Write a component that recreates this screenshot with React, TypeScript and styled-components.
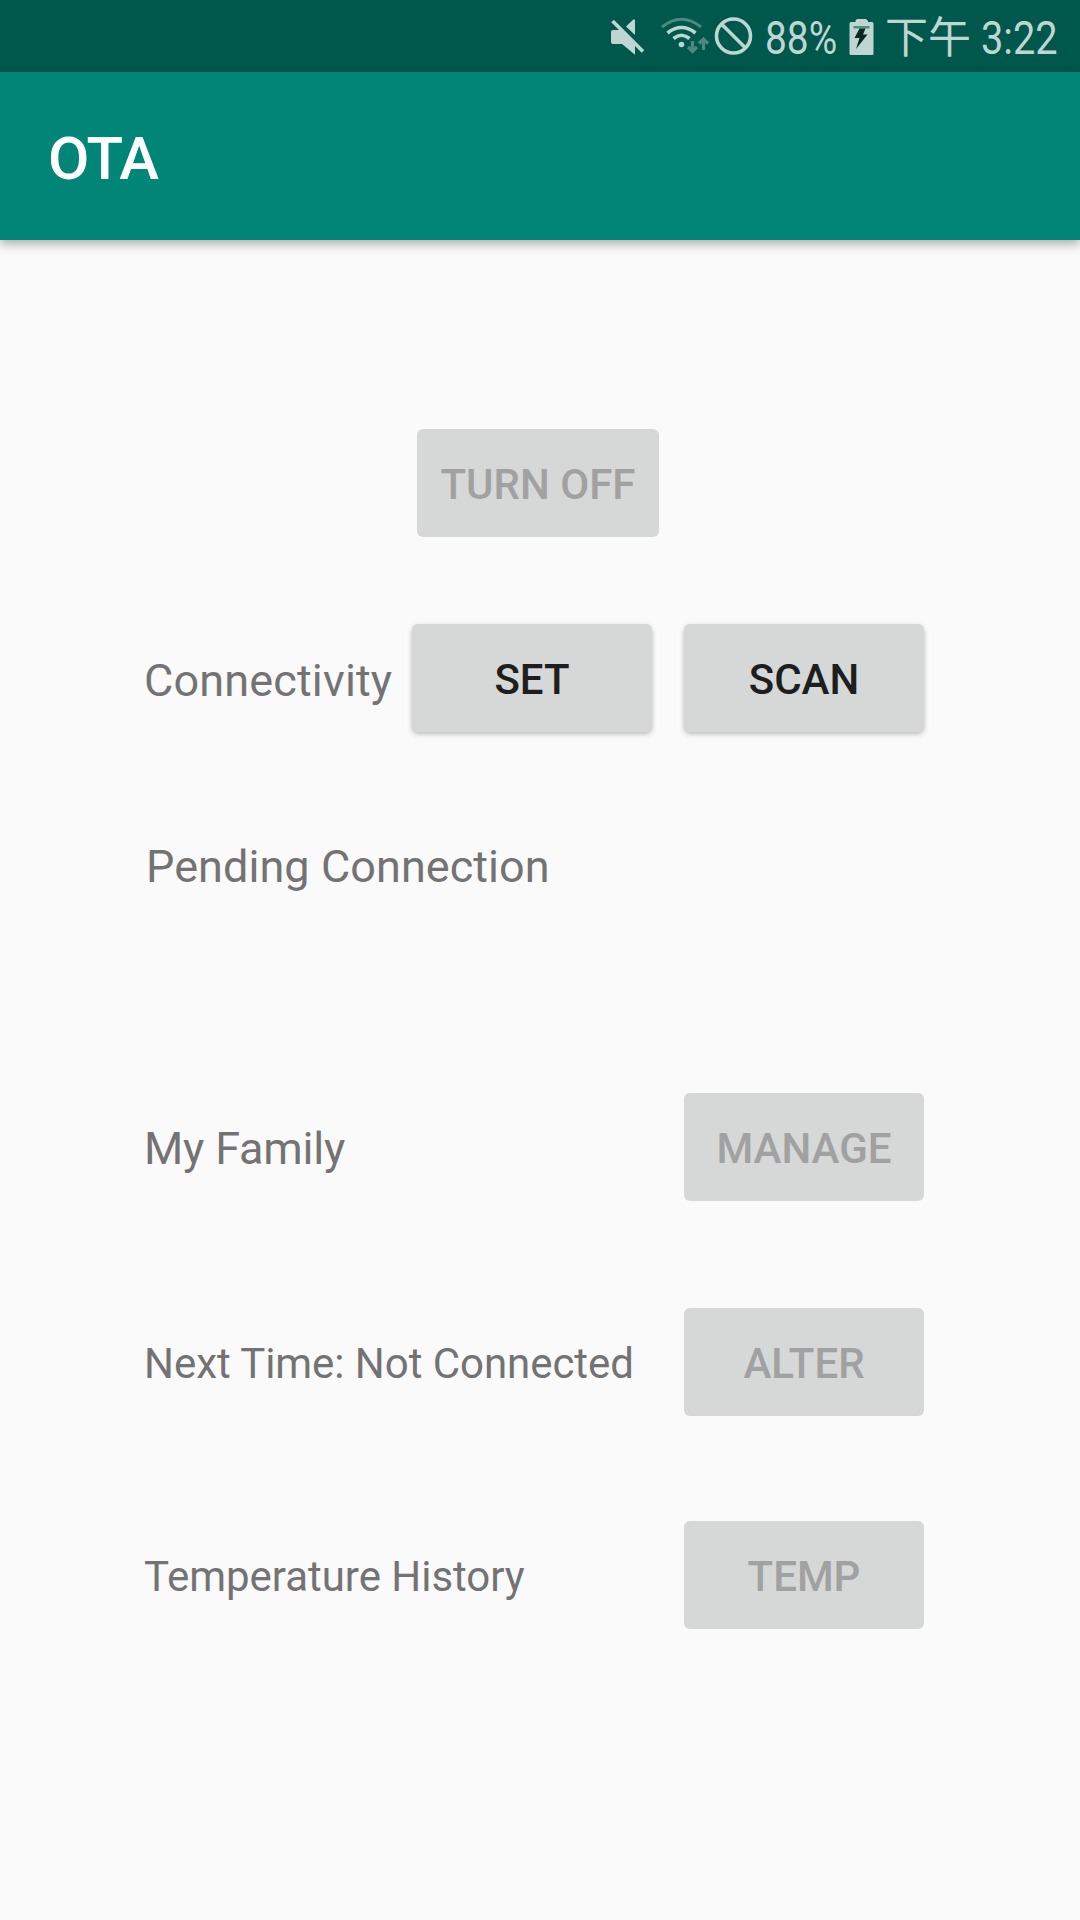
import React from 'react';
import styled, { createGlobalStyle } from 'styled-components';

const GlobalStyle = createGlobalStyle`
  * { box-sizing: border-box; }
  body { margin: 0; background: #fafafa; }
`;

const Screen = styled.div`
  width: 1080px;
  height: 1920px;
  display: flex;
  flex-direction: column;
  background: #fafafa;
  overflow: hidden;
  font-family: Roboto, "Noto Sans CJK SC", sans-serif;
`;

const StatusBar = styled.header`
  height: 72px;
  flex: none;
  display: flex;
  align-items: center;
  justify-content: flex-end;
  padding: 0 21px 0 0;
  background: #00574b;
  color: #bfd5d2;
`;

const StatusIcon = styled.svg<{ $gap: number }>`
  flex: none;
  display: block;
  margin-right: ${p => p.$gap}px;
`;

const StatusText = styled.span<{ $width: number; $gap: number; $size?: number; $scale?: number; $top?: number }>`
  display: block;
  width: ${p => p.$width}px;
  margin-right: ${p => p.$gap}px;
  padding-top: ${p => p.$top ?? 4}px;
  font-size: ${p => p.$size ?? 46}px;
  line-height: 64px;
  white-space: nowrap;
  transform: scaleX(${p => p.$scale ?? 0.865});
  transform-origin: 0 50%;
`;

const AppBar = styled.div`
  height: 168px;
  flex: none;
  display: flex;
  align-items: center;
  padding: 6px 48px 0;
  background: #008577;
  box-shadow: 0 4px 10px rgba(0, 0, 0, 0.32);
`;

const Title = styled.h1`
  margin: 0;
  color: #fff;
  font-size: 60px;
  font-weight: 500;
  line-height: 80px;
  letter-spacing: -1.3px;
`;

const Content = styled.main`
  flex: 1;
  display: flex;
  flex-direction: column;
  padding: 189px 156px 0 144px;
`;

const Row = styled.section<{ $gap: number; $left?: number }>`
  flex: none;
  height: 108px;
  margin-bottom: ${p => p.$gap}px;
  padding-left: ${p => p.$left ?? 0}px;
  display: flex;
  align-items: center;
`;

const Label = styled.span<{ $size: number; $shift?: number; $spacing?: number }>`
  flex: 1;
  color: #737373;
  font-size: ${p => p.$size}px;
  line-height: 60px;
  letter-spacing: ${p => p.$spacing ?? 0}px;
  padding-top: ${p => p.$shift ?? 4}px;
  white-space: nowrap;
`;

const Button = styled.button<{ $width?: number; $gap?: number }>`
  flex: none;
  width: ${p => p.$width ?? 240}px;
  height: 108px;
  margin: 0 ${p => p.$gap ?? 0}px 0 0;
  padding: 3px 0 0;
  border: 0;
  border-radius: 6px;
  background: #d6d7d7;
  color: #1e1e1e;
  font: 500 42px Roboto, sans-serif;
  box-shadow: 0 2px 5px rgba(0, 0, 0, 0.26);
  &:disabled { color: #a1a1a1; box-shadow: none; }
`;

const MuteIcon = () => (
  <StatusIcon $gap={15} width="35" height="38" viewBox="610 17 35 38">
    <path fill="currentColor" d="M613 30H621L635 44V54.800L622 44H613q-2 0-2-2V32q0-2 2-2zM626 26.500L633 19.800q2-1.500 2 1V35z" />
    <path d="M612.500 21L643 51.500" stroke="currentColor" strokeWidth="3.800" />
  </StatusIcon>
);

const WifiIcon = () => (
  <StatusIcon $gap={4.5} width="49" height="38" viewBox="660 17 49 38" fill="none" stroke="currentColor">
    <path d="M662 27Q681.500 11.500 701 27" strokeWidth="3" opacity=".4" />
    <path d="M667.500 33Q681.500 22 695.500 33M673.500 38.500Q681.500 32 689.500 38.500" strokeWidth="3.600" />
    <circle cx="681.500" cy="44.500" r="2.800" fill="currentColor" stroke="none" />
    <path d="M692.500 41V51M688 47l4.500 4.500L697 47M703.500 50V40M699 43.500l4.500-4.500 4.500 4.500" strokeWidth="3.200" opacity=".4" />
  </StatusIcon>
);

const BlockIcon = () => (
  <StatusIcon $gap={12.5} width="39" height="38" viewBox="713.5 17 39 38" fill="none" stroke="currentColor" strokeWidth="3.600">
    <circle cx="733" cy="36" r="17" />
    <path d="M721 24L745 48" />
  </StatusIcon>
);

const BatteryIcon = () => (
  <StatusIcon $gap={11.5} width="25" height="38" viewBox="0 -1 25 38">
    <path fill="currentColor" d="M8 1h9l2 2v1h4q1.500 0 1.500 1.500v30q0 1.500-1.500 1.500H2Q.500 37 .500 35.500v-30Q.500 4 2 4h4.500V2.500z" />
    <path fill="#4f8c84" d="M4.500 8h16v2.500h-16z" />
    <path fill="#0b2724" d="M10.500 10.500h6l-2.500 6h4.500L7 31l3.500-11H5.500z" />
  </StatusIcon>
);

export default function App() {
  return (
    <Screen>
      <GlobalStyle />
      <StatusBar>
        <MuteIcon />
        <WifiIcon />
        <BlockIcon />
        <StatusText $width={72} $gap={11.5} $scale={0.845}>88%</StatusText>
        <BatteryIcon />
        <StatusText $width={87} $gap={9} $size={43} $scale={1} $top={3}>下午</StatusText>
        <StatusText $width={78} $gap={0}>3:22</StatusText>
      </StatusBar>
      <AppBar><Title>OTA</Title></AppBar>
      <Content>
        <Row $gap={87} $left={273}><Button disabled $width={242}>TURN OFF</Button></Row>
        <Row $gap={80}>
          <Label $size={45} $shift={6} $spacing={0.15}>Connectivity</Label>
          <Button $gap={32}>SET</Button>
          <Button>SCAN</Button>
        </Row>
        <Row $gap={173} $left={2}><Label $size={45} $shift={2} $spacing={0.06}>Pending Connection</Label></Row>
        <Row $gap={107}><Label $size={45} $spacing={-0.2}>My Family</Label><Button disabled>MANAGE</Button></Row>
        <Row $gap={105}><Label $size={42} $spacing={-0.05}>Next Time: Not Connected</Label><Button disabled>ALTER</Button></Row>
        <Row $gap={0}><Label $size={42} $spacing={-0.03}>Temperature History</Label><Button disabled>TEMP</Button></Row>
      </Content>
    </Screen>
  );
}
